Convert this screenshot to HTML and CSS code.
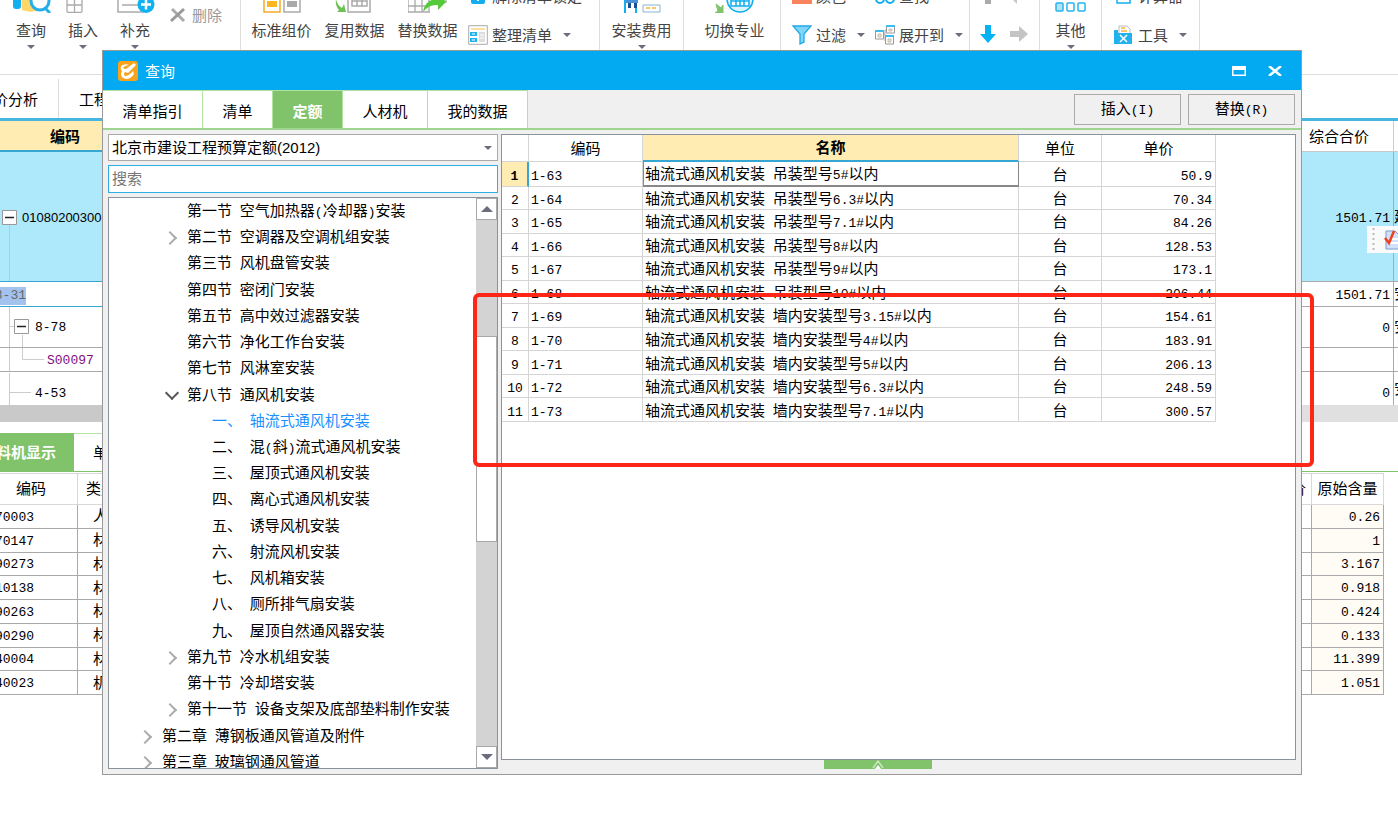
FILE: index.html
```html
<!DOCTYPE html>
<html lang="zh-CN">
<head>
<meta charset="utf-8">
<title>查询</title>
<link rel="stylesheet" href="styles.css">
</head>
<body>
<div class="app">
  <header class="ribbon">
    <div class="group g-edit">
      <button class="big"><svg width="40" height="32" viewBox="0 0 40 32"><path d="M2 8h8v17q0 3-3 3H5q-3 0-3-3z" fill="#12b0ee"/><path d="M11 4h14v26q-6 2-14-1z" fill="#ffd768"/><circle cx="29" cy="20" r="9" fill="#fff" stroke="#25aee8" stroke-width="3"/><path d="M34 27l5 5" stroke="#25aee8" stroke-width="3"/></svg><span>查询</span><i class="caret"></i></button>
      <button class="big"><svg width="40" height="32" viewBox="0 0 40 32"><path d="M4 10h15v20q0 1.500-2 1.500H6q-2 0-2-1.500zM4 17h15M4 24h15M11.500 10v21" fill="none" stroke="#aaa" stroke-width="1.300"/></svg><span>插入</span><i class="caret"></i></button>
      <button class="big"><svg width="40" height="32" viewBox="0 0 40 32"><path d="M3 4v27h26M7 24h16" fill="none" stroke="#aaa" stroke-width="1.500"/><circle cx="31" cy="23.500" r="8.500" fill="#10b1f2"/><path d="M31 18.500v10M26 23.500h10" stroke="#fff" stroke-width="2.500"/></svg><span>补充</span><i class="caret"></i></button>
      <div class="smalls one"><button class="small off"><svg width="20" height="20" viewBox="0 0 20 20"><path d="M4 4l12 12" stroke="#aaa" stroke-width="3"/><path d="M16 4L3 16" stroke="#999" stroke-width="3"/></svg><span>删除</span></button></div>
    </div>
    <div class="group g-data">
      <button class="big wide"><svg width="40" height="32" viewBox="0 0 40 32"><path d="M2 2h16v29H2z" fill="#fff" stroke="#f8a928" stroke-width="1.500"/><path d="M5 20h10v6H5z" fill="#fcb623"/><path d="M22 2h16v29H22z" fill="#fff" stroke="#aaa" stroke-width="1.500"/><path d="M25 20h10v6H25z" fill="#aaa"/></svg><span>标准组价</span></button>
      <button class="big wide"><svg width="40" height="32" viewBox="0 0 40 32"><path d="M13 2h22v29H13zM17 8h15v17H17zM17 14h15M17 20h15M22 8v17M27 8v17" fill="#fff" stroke="#aaa" stroke-width="1.500"/><path d="M1 18q1 6 6 9l2-4 2 8H2l2-2q-4-4-3-11z" fill="#6cc254"/></svg><span>复用数据</span></button>
      <button class="big wide"><svg width="40" height="32" viewBox="0 0 40 32"><path d="M0 4h38v18M0 4v27h22M0 18h22M0 25h20M7 4v27M14 4v27M21 4v27" fill="none" stroke="#aaa" stroke-width="1.300"/><path d="M15 31q2-13 15-13v-6l8 9-8 8v-5q-9-1-15 7z" fill="#55ca39"/></svg><span>替换数据</span></button>
      <div class="smalls">
        <button class="small"><svg width="20" height="20" viewBox="0 0 20 20"><path d="M3 3h14v13q0 2-2 2H5q-2 0-2-2z" fill="#12aef0"/><path d="M10 9v6" stroke="#fff" stroke-width="2"/></svg><span>解除清单锁定</span></button>
        <button class="small"><svg width="20" height="20" viewBox="0 0 20 20"><path d="M.700.700h18.600v18.600H.700z" fill="#fff" stroke="#aaa"/><path d="M3 3h14v2H3z" fill="#fde0a0"/><path d="M2 7h7v4H2zM2 13h7v4H2z" fill="#1fb4f0"/><path d="M11 7h6v10h-6z" fill="#ddd"/><path d="M4 9h3M4 15h3M12 10h4M12 13h4" stroke="#fff"/></svg><span>整理清单</span><i class="caret"></i></button>
      </div>
    </div>
    <div class="group g-install"><button class="big wide"><svg width="40" height="32" viewBox="0 0 40 32"><path d="M3 32V4M14 32V4M3 20h11" stroke="#12aef0" stroke-width="2"/><path d="M4 4h12v18H4z" fill="#4a90d9"/><path d="M6 22h3v5H6zM12 22h3v5h-3z" fill="#1c4f8c"/><path d="M8 4v15M12 4v15" stroke="#fff"/><path d="M21 24h17v7H21z" fill="#fff" stroke="#8ab4d0"/><path d="M24 27h11" stroke="#fbb53a" stroke-width="1.500" stroke-dasharray="4 2"/></svg><span>安装费用</span><i class="caret"></i></button></div>
    <div class="group g-major"><button class="big wide"><svg width="40" height="32" viewBox="0 0 40 32"><path d="M1 23l5 4 2-3v8H0l3-2z" fill="#80c36a" stroke="#80c36a"/><circle cx="25" cy="18" r="13" fill="#dff4fd" stroke="#12aef0" stroke-width="1.500"/><path d="M16 25V15h5v-5h8v5h5v10zM21 15v10M29 15v10M16 20h18M25 10v15" fill="#fff" stroke="#12aef0" stroke-width="1.500"/></svg><span>切换专业</span></button></div>
    <div class="group g-view">
      <div class="smalls col-a">
        <button class="small"><svg width="20" height="20" viewBox="0 0 20 20"><path d="M0 2h20v16H0z" fill="#f8835d"/></svg><span>颜色</span></button>
        <button class="small"><svg width="20" height="20" viewBox="0 0 20 20"><path d="M1 1h18l-7 8v8l-4 2V9z" fill="#7fd6f8" stroke="#20a9e6" stroke-width="1.300"/></svg><span>过滤</span><i class="caret"></i></button>
      </div>
      <div class="smalls">
        <button class="small"><svg width="20" height="20" viewBox="0 0 20 20"><circle cx="5" cy="13" r="4" fill="#fff" stroke="#12aef0" stroke-width="2"/><circle cx="15" cy="13" r="4" fill="#fff" stroke="#12aef0" stroke-width="2"/></svg><span>查找</span></button>
        <button class="small"><svg width="20" height="20" viewBox="0 0 20 20"><path d="M8 9h2V5h2M10 9v7h1" fill="none" stroke="#aaa"/><path d="M.500 6h8v8h-8zM11.500 1h8v7h-8zM10.500 11h8v8h-8z" fill="#fff" stroke="#999"/><path d="M0 6h9M11 1h9M10 11h9" stroke="#3bbcf2" stroke-width="2"/><path d="M3 9h3v3H3zM14 4h3v2h-3zM13 14h3v3h-3z" fill="#eadfc8" stroke="#c8c0b0"/></svg><span>展开到</span><i class="caret"></i></button>
      </div>
    </div>
    <div class="group g-move">
      <div class="smalls">
        <span class="pair"><svg width="20" height="20" viewBox="0 0 20 20"><path d="M7 18V8H2l8-8 8 8h-5v10z" fill="#aaa"/></svg><svg width="20" height="20" viewBox="0 0 20 20"><path d="M8 18L0 10l8-8v5h11v6H8z" fill="#c8c8c8"/></svg></span>
        <span class="pair"><svg width="20" height="20" viewBox="0 0 20 20"><path d="M7 0h6v9h5l-8 9-8-9h5z" fill="#07b2f4"/></svg><svg width="20" height="20" viewBox="0 0 20 20"><path d="M1 6h9V1l9 8-9 8v-5H1z" fill="#c4c4c4"/></svg></span>
      </div>
    </div>
    <div class="group g-other"><button class="big"><svg width="40" height="32" viewBox="0 0 40 32"><rect x="5" y="22" width="7" height="8" rx="1" fill="#b5e2f7" stroke="#25b5ee" stroke-width="1.500"/><rect x="16" y="22" width="7" height="8" rx="1" fill="#fff" stroke="#25b5ee" stroke-width="1.500"/><rect x="27" y="22" width="7" height="8" rx="1" fill="#fff" stroke="#25b5ee" stroke-width="1.500"/></svg><span>其他</span><i class="caret"></i></button></div>
    <div class="group g-tools">
      <div class="smalls">
        <button class="small"><svg width="20" height="20" viewBox="0 0 20 20"><path d="M3 1h13v16H3z" fill="#fff" stroke="#12aef0" stroke-width="1.500"/><path d="M6 14v-3M9.500 14v-3M13 14v-3" stroke="#12aef0" stroke-width="2"/></svg><span>计算器</span></button>
        <button class="small"><svg width="20" height="20" viewBox="0 0 20 20"><path d="M5 1h8l3 3v6H5z" fill="#fff" stroke="#bbb"/><path d="M7 3h4M7 6h6" stroke="#fbb53a" stroke-width="1.500"/><path d="M0 5h4v3h14v11H0z" fill="#21b2ee"/><path d="M6 10l7 7M13 10l-7 7" stroke="#fff" stroke-width="1.500"/></svg><span>工具</span><i class="caret"></i></button>
      </div>
    </div>
  </header>

  <nav class="pages"><a class="p1" href="#"><span>价分析</span></a><a class="p2" href="#">工程量</a></nav>

  <table class="sheet">
    <colgroup><col class="c-code"><col><col class="c-total"><col class="c-edge"></colgroup>
    <thead><tr><th class="sel">编码</th><th></th><th class="plain">综合合价</th><th></th></tr></thead>
    <tbody>
      <tr class="r1"><td><div class="node"><svg width="22" height="129" viewBox="0 0 22 129"><path d="M9.500 72v57" stroke="#bbc8cc"/><path d="M2.500 58.500h14v14h-14z" fill="#fff" stroke="#999"/><path d="M5 65.500h9" stroke="#222" stroke-width="1.500"/></svg><span>01080200300</span></div></td><td></td><td class="num">1501.71</td><td>建</td></tr>
      <tr class="r2"><td><span class="hit"><span>8-31</span></span></td><td></td><td class="num">1501.71</td><td>安</td></tr>
      <tr class="r3"><td><div class="node"><svg width="35" height="40" viewBox="0 0 35 40"><path d="M9.500 0v40M10 19.500h4M22.500 28v12" stroke="#ccc"/><path d="M14.500 12.500h14v14h-14z" fill="#fff" stroke="#999"/><path d="M17 19.500h9" stroke="#222" stroke-width="1.500"/></svg><span>8-78</span></div></td><td></td><td class="num">0</td><td>安</td></tr>
      <tr class="r4"><td><div class="node purple"><svg width="47" height="23" viewBox="0 0 47 23"><path d="M9.500 0v23M22.500 0v11.500H44" fill="none" stroke="#ccc"/></svg><span>S00097</span></div></td><td></td><td></td><td></td></tr>
      <tr class="r5"><td><div class="node"><svg width="35" height="32" viewBox="0 0 35 32"><path d="M9.500 0v32M10 19.500h21" stroke="#ccc"/></svg><span>4-53</span></div></td><td></td><td class="num">0</td><td>安</td></tr>
    </tbody>
  </table>
  <div class="hbar"></div>

  <nav class="subtabs"><a class="on" href="#"><span>料机显示</span></a><a href="#">单价构成</a></nav>
  <table class="detail">
    <colgroup><col class="d-code"><col class="d-kind"><col><col class="d-qty"></colgroup>
    <thead><tr><th>编码</th><th>类别</th><th class="tail">价</th><th>原始含量</th></tr></thead>
    <tbody>
      <tr><td><span>70003</span></td><td>人</td><td></td><td>0.26</td></tr>
      <tr><td><span>70147</span></td><td>材</td><td></td><td>1</td></tr>
      <tr><td><span>90273</span></td><td>材</td><td></td><td>3.167</td></tr>
      <tr><td><span>10138</span></td><td>材</td><td></td><td>0.918</td></tr>
      <tr><td><span>90263</span></td><td>材</td><td></td><td>0.424</td></tr>
      <tr><td><span>90290</span></td><td>材</td><td></td><td>0.133</td></tr>
      <tr><td><span>40004</span></td><td>材</td><td></td><td>11.399</td></tr>
      <tr><td><span>40023</span></td><td>机</td><td></td><td>1.051</td></tr>
    </tbody>
  </table>
</div>

<div class="floatbar"><svg width="31" height="27" viewBox="0 0 31 27"><path d="M6.500 2v24" stroke="#bbb" stroke-width="2" stroke-dasharray="2 3"/><path d="M19 5h9l5 5v13H19z" fill="#cfe2fa" stroke="#7a9cd0"/><path d="M22 13h9M22 17h9" stroke="#fff" stroke-width="2"/><path d="M18 12l4 5 5-12" fill="none" stroke="#f04020" stroke-width="2.500"/></svg></div>

<main class="dialog">
  <div class="title">
    <svg width="20" height="20" viewBox="0 0 20 20"><rect width="20" height="20" rx="3" fill="#f9a21b"/><path d="M3 5q4-3 8-1-5 1-6 3 1 1 3 1l8-6 2 2-8 8-3-1q-2 2 0 4 4 0 8-5l1 3q-3 5-8 5-5-1-5-5l1-3q-2-2-1-5z" fill="#fff"/></svg>
    <span>查询</span>
    <button class="win" aria-label="最大化"><svg width="14" height="10" viewBox="0 0 14 10"><path d="M.750.750h12.500v8.500H.750z" fill="none" stroke="#fff" stroke-width="1.500"/><path d="M0 0h14v4H0z" fill="#fff"/></svg></button>
    <button class="win" aria-label="关闭"><svg width="14" height="10" viewBox="0 0 14 10"><path d="M1 0l12 10M13 0L1 10" stroke="#fff" stroke-width="2.500"/></svg></button>
  </div>
  <div class="tabs">
    <button class="t4">清单指引</button><button class="t2">清单</button><button class="t2 on">定额</button><button class="t3">人材机</button><button class="t4">我的数据</button>
    <span class="fill"></span>
    <button class="act">插入<span class="m">(I)</span></button><button class="act">替换<span class="m">(R)</span></button>
  </div>
  <div class="body">
    <section class="left">
      <div class="pick"><select aria-label="定额库"><option>北京市建设工程预算定额(2012)</option></select><i class="caret"></i></div>
      <input class="search" type="text" placeholder="搜索" aria-label="搜索">
      <div class="treebox">
        <ul class="tree">
          <li>第一节<span class="m"> </span>空气加热器<span class="m">(</span>冷却器<span class="m">)</span>安装</li>
          <li class="shut">第二节<span class="m"> </span>空调器及空调机组安装</li>
          <li>第三节<span class="m"> </span>风机盘管安装</li>
          <li>第四节<span class="m"> </span>密闭门安装</li>
          <li>第五节<span class="m"> </span>高中效过滤器安装</li>
          <li>第六节<span class="m"> </span>净化工作台安装</li>
          <li>第七节<span class="m"> </span>风淋室安装</li>
          <li class="open">第八节<span class="m"> </span>通风机安装</li>
          <li class="leaf cur">一、<span class="m"> </span>轴流式通风机安装</li>
          <li class="leaf">二、<span class="m"> </span>混<span class="m">(</span>斜<span class="m">)</span>流式通风机安装</li>
          <li class="leaf">三、<span class="m"> </span>屋顶式通风机安装</li>
          <li class="leaf">四、<span class="m"> </span>离心式通风机安装</li>
          <li class="leaf">五、<span class="m"> </span>诱导风机安装</li>
          <li class="leaf">六、<span class="m"> </span>射流风机安装</li>
          <li class="leaf">七、<span class="m"> </span>风机箱安装</li>
          <li class="leaf">八、<span class="m"> </span>厕所排气扇安装</li>
          <li class="leaf">九、<span class="m"> </span>屋顶自然通风器安装</li>
          <li class="shut">第九节<span class="m"> </span>冷水机组安装</li>
          <li>第十节<span class="m"> </span>冷却塔安装</li>
          <li class="shut">第十一节<span class="m"> </span>设备支架及底部垫料制作安装</li>
          <li class="shut chap">第二章<span class="m"> </span>薄钢板通风管道及附件</li>
          <li class="shut chap">第三章<span class="m"> </span>玻璃钢通风管道</li>
        </ul>
        <div class="scroll"><button aria-label="向上"><i class="up"></i></button><span class="track-a"></span><span class="thumb"></span><span class="track-b"></span><button aria-label="向下"><i class="down"></i></button></div>
      </div>
    </section>
    <section class="right">
      <div class="gridbox">
        <table class="quota">
          <colgroup><col class="q1"><col class="q2"><col class="q3"><col class="q4"><col class="q5"></colgroup>
          <thead><tr><th></th><th>编码</th><th class="sel">名称</th><th>单位</th><th>单价</th></tr></thead>
          <tbody>
            <tr class="cur"><td>1</td><td>1-63</td><td>轴流式通风机安装<span class="m"> </span>吊装型号<span class="m">5#</span>以内</td><td>台</td><td>50.9</td></tr>
            <tr><td>2</td><td>1-64</td><td>轴流式通风机安装<span class="m"> </span>吊装型号<span class="m">6.3#</span>以内</td><td>台</td><td>70.34</td></tr>
            <tr><td>3</td><td>1-65</td><td>轴流式通风机安装<span class="m"> </span>吊装型号<span class="m">7.1#</span>以内</td><td>台</td><td>84.26</td></tr>
            <tr><td>4</td><td>1-66</td><td>轴流式通风机安装<span class="m"> </span>吊装型号<span class="m">8#</span>以内</td><td>台</td><td>128.53</td></tr>
            <tr><td>5</td><td>1-67</td><td>轴流式通风机安装<span class="m"> </span>吊装型号<span class="m">9#</span>以内</td><td>台</td><td>173.1</td></tr>
            <tr><td>6</td><td>1-68</td><td>轴流式通风机安装<span class="m"> </span>吊装型号<span class="m">10#</span>以内</td><td>台</td><td>206.44</td></tr>
            <tr><td>7</td><td>1-69</td><td>轴流式通风机安装<span class="m"> </span>墙内安装型号<span class="m">3.15#</span>以内</td><td>台</td><td>154.61</td></tr>
            <tr><td>8</td><td>1-70</td><td>轴流式通风机安装<span class="m"> </span>墙内安装型号<span class="m">4#</span>以内</td><td>台</td><td>183.91</td></tr>
            <tr><td>9</td><td>1-71</td><td>轴流式通风机安装<span class="m"> </span>墙内安装型号<span class="m">5#</span>以内</td><td>台</td><td>206.13</td></tr>
            <tr><td>10</td><td>1-72</td><td>轴流式通风机安装<span class="m"> </span>墙内安装型号<span class="m">6.3#</span>以内</td><td>台</td><td>248.59</td></tr>
            <tr><td>11</td><td>1-73</td><td>轴流式通风机安装<span class="m"> </span>墙内安装型号<span class="m">7.1#</span>以内</td><td>台</td><td>300.57</td></tr>
          </tbody>
        </table>
      </div>
      <button class="handle" aria-label="展开"><svg width="14" height="9" viewBox="0 0 14 9"><path d="M2 8l5-7 5 7" fill="none" stroke="#c8e8bc" stroke-width="1.500"/><path d="M4 9l3-4 3 4z" fill="#fff"/></svg></button>
    </section>
  </div>
</main>
<div class="mark"></div>
</body>
</html>
```

FILE: styles.css
```css
* { box-sizing: border-box; }
html, body { height: 100%; }
body {
  margin: 0;
  position: relative;
  overflow: hidden;
  background: #fff;
  color: #000;
  font: 15px/20px "Liberation Mono", "Noto Sans CJK SC", monospace;
}
button { margin: 0; padding: 0; border: 0; background: none; color: inherit; font: inherit; }
a { color: inherit; text-decoration: none; }
table { border-collapse: separate; border-spacing: 0; table-layout: fixed; }
th, td { padding: 0; font-weight: 400; white-space: nowrap; overflow: hidden; }
svg { display: block; flex: none; }
.m { font-size: 13px; }
.caret { flex: none; width: 0; height: 0; border: 4px solid transparent; border-top-color: #6b6d7c; border-bottom: 0; }

/* ribbon */
.ribbon { display: flex; height: 75px; overflow: hidden; border-bottom: 1px solid #ddd; color: #444; font-family: "Noto Sans CJK SC", sans-serif; }
.group { flex: none; display: flex; align-items: flex-end; height: 66px; border-right: 1px solid #ddd; }
.big { display: flex; flex-direction: column; align-items: center; width: 52px; height: 85px; }
.big.wide { width: 73px; }
.big span { margin: 7px 0 5px; white-space: nowrap; }
.smalls { display: flex; flex-direction: column; gap: 19px; padding-bottom: 21px; }
.smalls.one { padding-bottom: 41px; }
.small { display: flex; align-items: center; gap: 4px; white-space: nowrap; }
.small .caret { margin-left: 7px; }
.off { color: #999; }
.pair { display: flex; gap: 11px; }
.g-edit { width: 241px; padding-left: 5px; }
.g-edit .smalls { padding-left: 7px; }
.g-data { width: 359px; padding-left: 4px; }
.g-data .smalls { padding-left: 4px; }
.g-install { width: 84px; justify-content: center; }
.g-major { width: 97px; padding-left: 14px; }
.g-view { width: 189px; padding-left: 11px; }
.col-a { width: 83px; }
.g-move { width: 70px; padding-left: 8px; }
.g-other { width: 62px; justify-content: center; }
.g-tools { width: 98px; padding-left: 12px; }

/* page tabs */
.pages { display: flex; height: 43px; padding-top: 4px; font-family: "Noto Sans CJK SC", sans-serif; line-height: 40px; }
.p1 { display: flex; justify-content: flex-end; width: 59px; padding-right: 20px; border-right: 1px solid #ddd; white-space: nowrap; }
.p2 { padding-left: 20px; }

/* main sheet */
.sheet { width: 100%; border-top: 3px solid #48b5e0; }
.c-code { width: 120px; }
.c-total { width: 93px; }
.c-edge { width: 4px; }
.sheet th { height: 31px; padding-top: 6px; border-bottom: 1px solid #c8c8c8; }
.sheet th.sel { padding-left: 10px; background: #ffecb3; border-bottom: 2px solid #35a7d2; font-weight: 700; }
.sheet th.plain { padding-left: 8px; text-align: left; border-right: 1px solid #ccc; }
.sheet td { border-bottom: 1px solid #aaa; }
.sheet td:nth-child(3) { border-right: 1px solid #aaa; }
.sheet td:nth-child(4) { padding-top: 4px; }
.sheet .num { padding: 4px 3px 0 0; text-align: right; font-size: 13px; }
.r1 { background: #ade8fb; }
.r1 td { height: 130px; }
.r2 td { height: 24px; }
.r1 td:first-child, .r2 td:first-child { border-bottom-color: #35a7d2; }
.r3 td { height: 41px; }
.r4 td { height: 24px; }
.r5 td { height: 33px; }
.sheet .r5 td { border-bottom: 0; }
.node { display: flex; align-items: center; font-size: 13px; }
.node span { padding-top: 2px; }
.r1 .node { font-family: "Liberation Sans", sans-serif; }
.r5 .node span, .sheet .r5 .num { padding-top: 10px; }
.purple { color: #80107f; }
.hit { display: flex; justify-content: flex-end; width: 26px; margin-top: 4px; background: #a3c3ee; color: #666; font-size: 13px; line-height: 18px; }
.hbar { height: 17px; background: linear-gradient(90deg, #c9c9c9 50%, #e0e0e0 50%); }

/* detail table */
.subtabs { display: flex; height: 39px; margin-top: 11px; border-bottom: 1px solid #80c36a; line-height: 42px; }
.subtabs a { padding-left: 19px; border-top: 1px solid #b5e5a5; }
.subtabs .on { display: flex; justify-content: flex-end; width: 74px; padding: 0 18px 0 0; background: #80c36a; border-color: #80c36a; color: #fff; font-weight: 700; white-space: nowrap; }
.detail { width: calc(100% - 14px); height: 222px; margin-top: 1px; }
.d-code { width: 78px; }
.d-kind { width: 60px; }
.d-qty { width: 72px; }
.detail th { height: 32px; padding-top: 4px; border: solid #d8d8d8; border-width: 1px 1px 1px 0; }
.detail th:first-child { padding-right: 31px; text-align: right; }
.detail th:nth-child(2) { padding-left: 8px; text-align: left; }
.detail th.tail { padding-right: 5px; text-align: right; }
.detail td { height: 23px; padding-top: 3px; border: solid #aaa; border-width: 0 1px 1px 0; font-size: 13px; line-height: 18px; }
.detail td:first-child span { display: flex; justify-content: flex-end; width: 34px; }
.detail td:nth-child(2) { padding: 4px 0 0 15px; font-size: 15px; }
.detail td:last-child { padding-right: 3px; background: #fffbf5; text-align: right; }

/* floating bar at the window edge */
.floatbar { position: absolute; top: 226px; right: 0; width: 31px; height: 27px; overflow: hidden; background: #fafafa; }

/* dialog */
.dialog { position: absolute; top: 50px; left: 102px; right: 96px; height: 725px; display: flex; flex-direction: column; background: #f0f0f0; border: 1px solid #999; }
.title { display: flex; align-items: center; height: 39px; padding: 0 19px 0 15px; background: #03a9f1; color: #fff; font-family: "Noto Sans CJK SC", sans-serif; }
.title span { flex: 1; padding-left: 7px; }
.win { margin-left: 22px; }
.tabs { display: flex; align-items: center; height: 40px; padding-right: 6px; border-bottom: 2px solid #9fd68f; }
.tabs > button { align-self: stretch; padding-top: 8px; background: #fff; border: solid #b0e2a0; border-width: 1px 1px 0 0; }
.tabs .t4 { width: 100px; }
.tabs .t2 { width: 70px; }
.tabs .t3 { width: 85px; }
.tabs .on { background: #80c36a; color: #fff; font-weight: 700; }
.fill { flex: 1; }
.tabs > .act { align-self: center; width: 107px; height: 31px; margin-left: 7px; padding: 4px 0 0; background: #f0f0f0; border: 1px solid #aaa; }
.body { flex: 1; min-height: 0; display: flex; gap: 3px; padding: 4px 5px 5px; }
.left { width: 390px; display: flex; flex-direction: column; }
.pick { position: relative; flex: none; }
.pick select { display: block; width: 100%; height: 27px; padding: 0 3px; border: 1px solid #aaa; border-radius: 0; background: #fff; color: #000; appearance: none; font: 15px/20px "Liberation Sans", "Noto Sans CJK SC", sans-serif; }
.pick .caret { position: absolute; right: 6px; top: 12px; }
.search { flex: none; width: 100%; height: 28px; margin: 4px 0; padding: 2px 3px 0; border: 1px solid #2caee6; background: #fff; font: inherit; }
.search::placeholder { color: #777; }
.treebox { flex: 1; min-height: 0; display: flex; overflow: hidden; background: #fff; border: 1px solid #8c929b; }
.tree { flex: 1; display: grid; grid-auto-rows: 1fr; height: 577px; margin: 0; padding: 0; list-style: none; }
.tree li { position: relative; padding: 5px 0 0 78px; line-height: 20px; white-space: pre; }
.tree .leaf { padding-left: 103px; }
.tree .chap { padding-left: 53px; }
.cur.leaf { color: #1890ff; }
.shut::before, .open::before { content: ""; position: absolute; top: 9px; left: 56px; width: 8px; height: 8px; border: solid #aaa; border-width: 2px 2px 0 0; transform: rotate(45deg); }
.open::before { top: 6px; left: 58px; border-color: #555; transform: rotate(135deg); }
.chap::before { left: 31px; }
.scroll { display: flex; flex-direction: column; width: 21px; background: #d3d3d3; }
.scroll button { display: flex; align-items: center; justify-content: center; height: 22px; background: #fff; border: 1px solid #aaa; }
.up, .down { border: 6px solid transparent; border-top: 0; border-bottom-color: #6b6d7c; }
.down { border-top: 6px solid #6b6d7c; border-bottom: 0; }
.track-a { flex: 117; }
.thumb { flex: 206; background: #fff; border: 1px solid #aaa; }
.track-b { flex: 206; }
.right { flex: 1; min-width: 0; display: flex; flex-direction: column; align-items: center; }
.gridbox { flex: 1; align-self: stretch; background: #fff; border: 1px solid #8c929b; overflow: hidden; }
.handle { display: flex; justify-content: center; width: 108px; height: 9px; margin-right: 42px; background: #80c36a; }

.quota { width: 714px; height: 287px; }
.q1 { width: 27px; }
.q2 { width: 114px; }
.q3 { width: 376px; }
.q4 { width: 83px; }
.q5 { width: 114px; }
.quota th { height: 26px; padding-top: 5px; border: solid #d5d5d5; border-width: 0 1px 1px 0; }
.quota th.sel { background: #ffecb3; border-bottom: 2px solid #35a7d2; font-weight: 700; }
.quota td { height: 23px; padding: 5px 2px 0; border: solid #d5d5d5; border-width: 0 1px 1px 0; line-height: 17px; }
.quota td:first-child, .quota td:nth-child(2), .quota td:last-child { font-size: 13px; }
.quota td:first-child { padding-left: 0; padding-right: 0; text-align: center; }
.quota td:nth-child(4) { text-align: center; }
.quota td:last-child { padding-right: 3px; text-align: right; }
.quota .cur td:first-child { background: #ffecb3; border-right: 2px solid #35a7d2; font-weight: 700; }
.quota .cur td:nth-child(3) { box-shadow: inset 1px 0 #888; border-color: #888; border-bottom-width: 2px; }

.mark { position: absolute; left: 473px; right: 84px; top: 293px; height: 174px; border: 4px solid #ff2517; border-radius: 6px; pointer-events: none; }
```
